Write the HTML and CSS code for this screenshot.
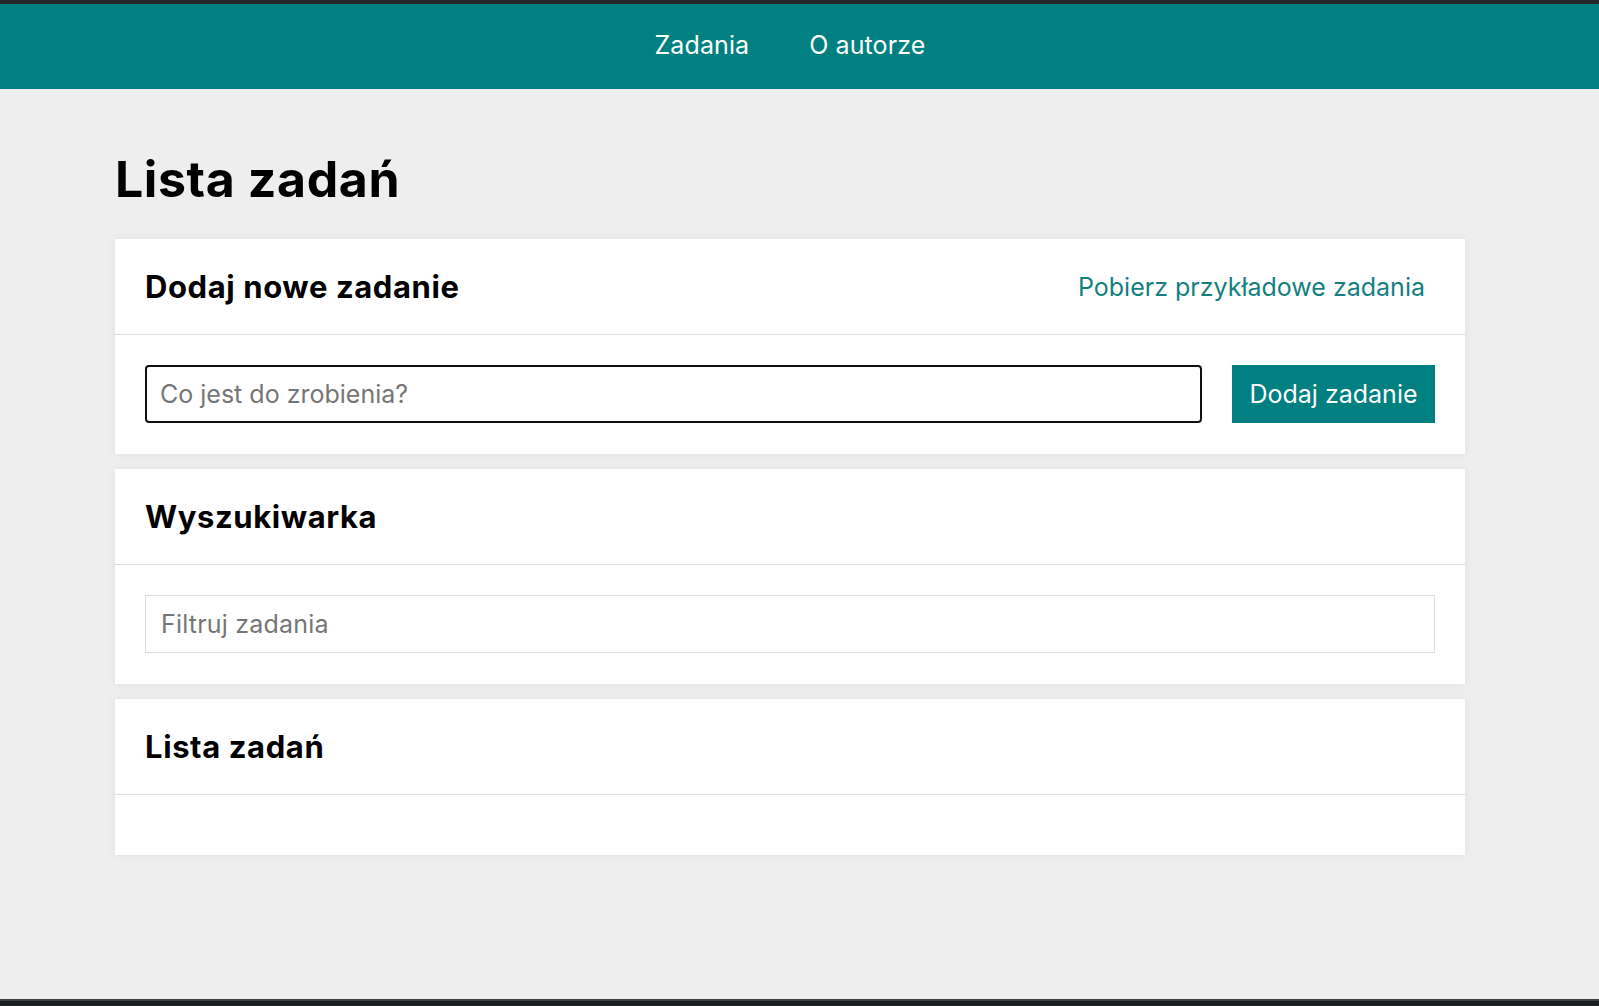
FILE: index.html
```html
<!DOCTYPE html>
<html lang="pl">
<head>
<meta charset="utf-8">
<title>Lista zadań</title>
<link rel="stylesheet" href="styles.css">
</head>
<body>
<div class="page">
  <div class="topstrip"></div>
  <nav class="nav">
    <div class="nav-inner">
      <a class="nav-link" href="#">Zadania</a>
      <a class="nav-link" href="#">O autorze</a>
    </div>
  </nav>
  <main class="main">
    <h1 class="page-title">Lista zadań</h1>
    <section class="card">
      <header class="card-head">
        <h2 class="card-title">Dodaj nowe zadanie</h2>
        <a class="card-link" href="#">Pobierz przykładowe zadania</a>
      </header>
      <div class="card-body card-body-form add-row">
        <input class="field field-focus" type="text" placeholder="Co jest do zrobienia?">
        <button class="btn" type="button">Dodaj zadanie</button>
      </div>
    </section>
    <section class="card">
      <header class="card-head">
        <h2 class="card-title">Wyszukiwarka</h2>
      </header>
      <div class="card-body card-body-form">
        <input class="field" type="text" placeholder="Filtruj zadania">
      </div>
    </section>
    <section class="card">
      <header class="card-head">
        <h2 class="card-title">Lista zadań</h2>
      </header>
      <div class="card-body"></div>
    </section>
  </main>
  <div class="bottomstrip"></div>
</div>
</body>
</html>
```

FILE: styles.css
```css
* { box-sizing: border-box; }
html, body { margin: 0; padding: 0; }
body {
  background: #eeeeee;
  font-family: "Inter", "Noto Sans", sans-serif;
  color: #000;
}
.page {
  min-height: 100vh;
  display: flex;
  flex-direction: column;
}
.topstrip { height: 4px; background: #25282b; }
.bottomstrip {
  height: 7px;
  background: #1b1e21;
  border-top: 2px solid #3c4146;
}
.nav {
  background: #008080;
  height: 85px;
  padding-right: 19px;
}
.nav-inner {
  height: 100%;
  display: flex;
  justify-content: center;
  align-items: center;
  padding-bottom: 4px;
}
.nav-link {
  color: #fff;
  text-decoration: none;
  font-size: 25px;
  padding: 0 30px;
  letter-spacing: 0.1px;
}
.main {
  flex: 1;
  padding: 0 134px 40px 115px;
}
.page-title {
  margin: 60px 0 30px;
  font-size: 50px;
  line-height: 60px;
  font-weight: 700;
  letter-spacing: 0.6px;
}
.card {
  background: #fff;
  box-shadow: 0 0 10px rgba(0,0,0,0.06);
  margin-bottom: 15px;
}
.card-head {
  height: 96px;
  border-bottom: 1px solid #dddddd;
  padding: 0 30px;
  display: flex;
  align-items: center;
  justify-content: space-between;
}
.card-title {
  margin: 0;
  font-size: 31px;
  font-weight: 700;
  letter-spacing: 0.6px;
}
.card-link {
  color: #157f7f;
  text-decoration: none;
  font-size: 25px;
  padding: 10px;
}
.card-body {
  padding: 30px;
  min-height: 60px;
}
.card-body-form {
  padding-bottom: 31px;
}
.add-row {
  display: flex;
  gap: 30px;
}
.field {
  display: block;
  width: 100%;
  height: 58px;
  border: 1px solid #dddddd;
  padding: 0 15px;
  font-family: inherit;
  font-size: 25px;
  letter-spacing: 0.2px;
  color: #333;
  background: #fff;
  outline: none;
}
.field::placeholder { color: #767676; }
.field-focus {
  flex: 1;
  border: 2px solid #111;
  border-radius: 4px;
  padding: 0 13px;
  letter-spacing: 0;
}
.btn {
  flex: none;
  height: 58px;
  width: 203px;
  border: 0;
  background: #008080;
  color: #fff;
  font-family: inherit;
  font-size: 25px;
  padding: 0 10px;
}
```
